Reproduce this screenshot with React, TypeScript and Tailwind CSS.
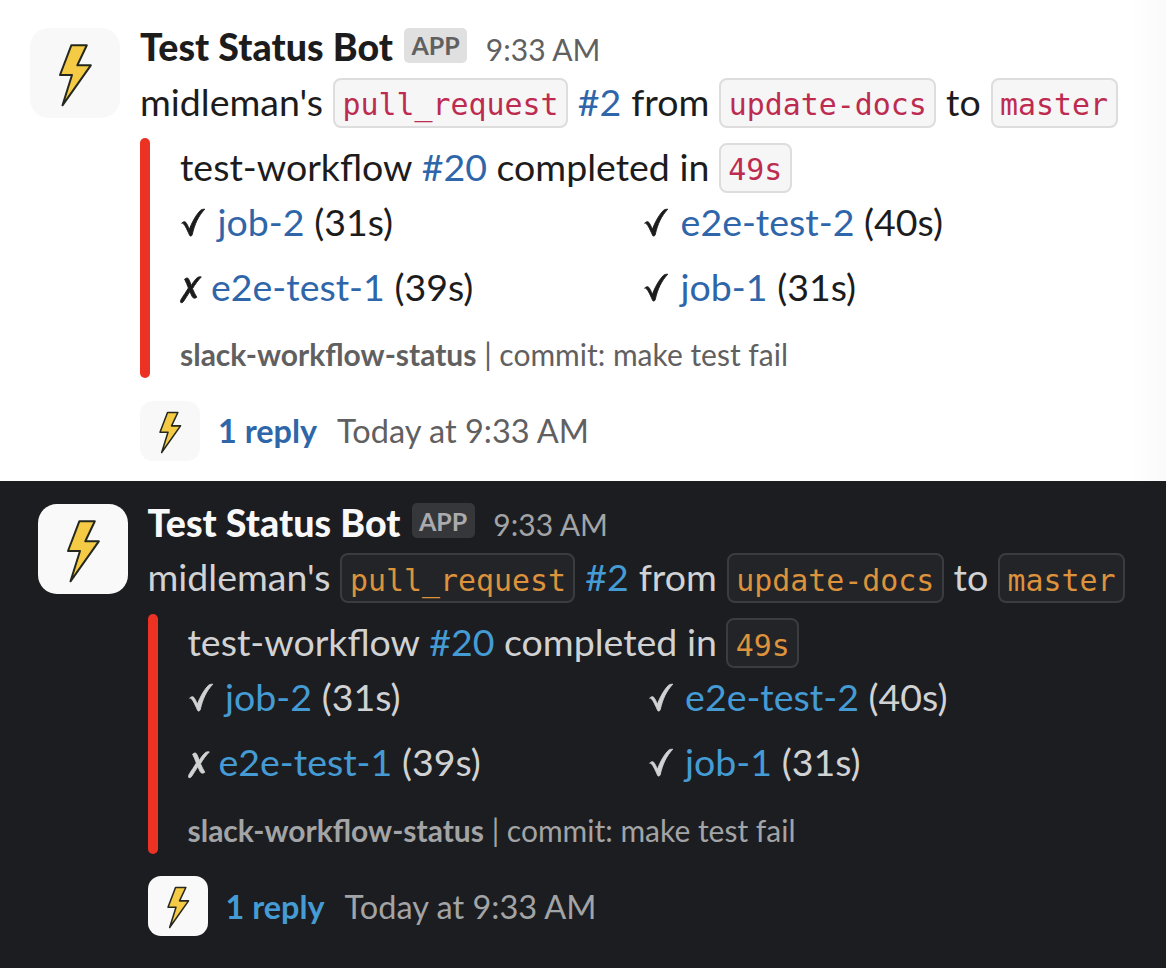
import React from "react";
import clsx from "clsx";

type Theme = "light" | "dark";

const palette = {
  light: {
    name: "text-[#1d1c1d]",
    body: "text-[#1d1c1d]",
    muted: "text-[#616061]",
    badge: "bg-[#e0e0e0] text-[#616061]",
    link: "text-[#2f66aa]",
    code: "bg-[#f6f6f6] border-[#dddddd] text-[#bd2c50]",
    avatar: "bg-[#f8f8f8]",
  },
  dark: {
    name: "text-[#f8f8f8]",
    body: "text-[#d1d2d3]",
    muted: "text-[#a3a4a6]",
    badge: "bg-[#36373b] text-[#ababad]",
    link: "text-[#459bd3]",
    code: "bg-[#232428] border-[#3b3c40] text-[#dd923c]",
    avatar: "bg-[#f9f9f9]",
  },
};

function Avatar({ theme, small = false }: { theme: Theme; small?: boolean }) {
  return (
    <div
      className={clsx(
        "shrink-0",
        small ? "size-[60px] rounded-[13px]" : "size-[90px] rounded-[19px]",
        palette[theme].avatar,
      )}
    >
      <svg viewBox="0 0 90 90" className="size-full">
        <path
          d="M41.3 17.3H56.8L47.3 37.3H60.8L32.5 77.3L42 47H30Z"
          fill="#f5cb45"
          stroke="#24281f"
          strokeWidth={small ? 2.3 : 2}
          strokeLinejoin="round"
        />
      </svg>
    </div>
  );
}

function Code({ theme, children }: { theme: Theme; children: React.ReactNode }) {
  return (
    <code
      className={clsx(
        "flex h-[50px] items-center rounded-[8px] border-[2.5px] px-[7.5px] pt-[5px] font-['DejaVu_Sans_Mono',monospace] text-[29.9px] leading-none",
        palette[theme].code,
      )}
    >
      {children}
    </code>
  );
}

function Mark({ ok }: { ok: boolean }) {
  return (
    <svg
      viewBox={ok ? "0.8 0 37.6 36" : "0.5 0 31 36"}
      className={clsx("h-9 shrink-0", ok ? "w-[37.6px]" : "w-[31px]")}
      fill="currentColor"
      stroke="currentColor"
      strokeWidth="0.9"
      strokeLinejoin="round"
      role="img"
      aria-label={ok ? "passed" : "failed"}
    >
      {ok ? (
        <path d="M2.4 18.2C3.6 16.9 5.6 16.2 6.4 17.2C7.8 18.8 8.9 21.2 10.2 24.3C12.6 17.6 16.6 10 21.2 5.4C22.1 4.5 23.6 4.2 25.6 4.2C19.2 11 15.4 19 13 29.8C12.6 31 11.2 31.4 10.6 30.7C8.6 26.4 6.3 20.7 4.2 18.7C3.7 18.2 3.1 18 2.4 18.2Z" />
      ) : (
        <path d="M5.1 9.2C6.3 7.9 8.3 7.6 9 8.8C10.1 10.7 10.8 13 11.7 15.4C13.9 11.9 16 9 18.1 7.4C19.3 6.7 20.6 6.7 21.8 6.9C18.4 10.4 15.4 14.5 13 18.7C14.3 21.9 15.7 24.6 17.3 27.2C15.6 28.6 13.8 28.6 12.8 26.8C11.9 25.1 11.1 23.4 10.4 21.5C8.2 25 6.2 28.1 4.1 31.4C3.2 32.7 1.9 33.1 1 32.2C0.8 31.2 1.2 29.9 2.1 28.5C4.5 25.2 6.7 21.5 8.9 18C7.6 14.7 6.5 11.8 5.1 9.2Z" />
      )}
    </svg>
  );
}

function Job({ theme, ok, name, time }: { theme: Theme; ok: boolean; name: string; time: string }) {
  return (
    <div className="flex h-[55px] items-center">
      <Mark ok={ok} />
      <span className="-mt-[2.5px] whitespace-pre">
        <a className={palette[theme].link}>{name}</a> ({time})
      </span>
    </div>
  );
}

function Message({ theme }: { theme: Theme }) {
  const c = palette[theme];
  return (
    <article
      className={clsx(
        "flex gap-5 whitespace-nowrap font-[Lato,sans-serif] text-[37.5px] leading-[55px]",
        c.body,
      )}
    >
      <Avatar theme={theme} />
      <div className="min-w-0 flex-1">
        <header className="-mt-2 flex h-[55px] items-center">
          <span className={clsx("-mt-0.5 font-black tracking-[0.08px]", c.name)}>Test Status Bot</span>
          <span
            className={clsx(
              "-mt-[5px] ml-[11px] flex h-[35px] items-center rounded-[5px] px-[7.5px] pt-px text-[25px] font-bold leading-none",
              c.badge,
            )}
          >
            APP
          </span>
          <time className={clsx("ml-[18.5px] pt-[3px] text-[30px]", c.muted)}>9:33 AM</time>
        </header>
        <div className="flex h-[55px] items-center gap-[9.9px] [&>a]:-mt-[2.5px] [&>span]:-mt-[2.5px]">
          <span>midleman's</span>
          <Code theme={theme}>pull_request</Code>
          <a className={c.link}>#2</a>
          <span>from</span>
          <Code theme={theme}>update-docs</Code>
          <span>to</span>
          <Code theme={theme}>master</Code>
        </div>
        <div className="mt-2 flex h-[240px] gap-[30px]">
          <div className="w-[10px] shrink-0 rounded-full bg-[#ec3323]" />
          <div className="flex-1">
            <div className="mt-[2px] flex h-[55px] items-center gap-[9.4px] [&>a]:-mt-[2.5px] [&>span]:-mt-[2.5px]">
              <span>test-workflow</span>
              <a className={c.link}>#20</a>
              <span>completed in</span>
              <Code theme={theme}>49s</Code>
            </div>
            <div
              className={clsx(
                "grid gap-y-[10px]",
                theme === "light" ? "grid-cols-[463px_1fr]" : "grid-cols-[460px_1fr]",
              )}
            >
              <Job theme={theme} ok name="job-2" time="31s" />
              <Job theme={theme} ok name="e2e-test-2" time="40s" />
              <Job theme={theme} ok={false} name="e2e-test-1" time="39s" />
              <Job theme={theme} ok name="job-1" time="31s" />
            </div>
            <div className={clsx("mt-[19px] text-[30px] leading-10", c.muted)}>
              <b>slack-workflow-status</b> | commit: make test fail
            </div>
          </div>
        </div>
        <footer className="mt-[22.5px] flex h-[60px] items-center">
          <Avatar theme={theme} small />
          <a className={clsx("ml-[18px] text-[32.4px] font-bold", c.link)}>1 reply</a>
          <span className={clsx("ml-5 text-[32.5px]", c.muted)}>Today at 9:33 AM</span>
        </footer>
      </div>
    </article>
  );
}

export default function App() {
  return (
    <main className="flex h-[968px] w-[1166px] flex-col overflow-hidden">
      <section className="flex h-[481px] bg-white">
        <div className="w-[1132px] pl-[30px] pt-[28px]">
          <Message theme="light" />
        </div>
        <div className="flex-1 bg-linear-to-r from-white to-[#fafafa]" />
      </section>
      <section className="flex-1 bg-[#1c1d21] pl-[37.5px] pt-[22.5px]">
        <Message theme="dark" />
      </section>
    </main>
  );
}
